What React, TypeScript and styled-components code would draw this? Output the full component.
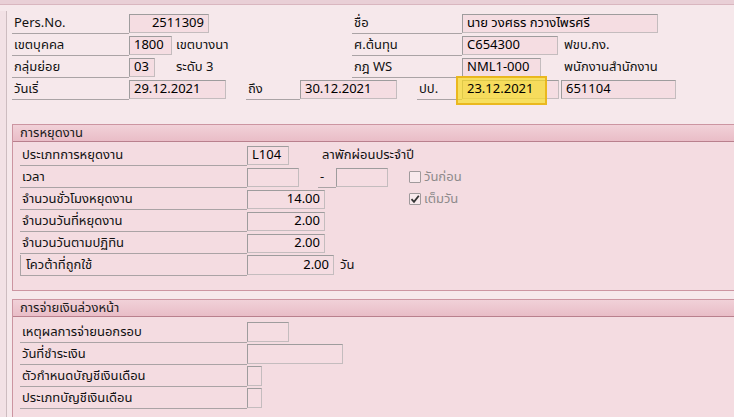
import React from "react";
import styled, { createGlobalStyle } from "styled-components";

const GlobalStyle = createGlobalStyle`
  html, body {
    margin: 0;
    padding: 0;
    background: #f6e8eb;
    overflow: hidden;
  }
  body {
    font-family: Tahoma, "Noto Sans Thai", "Noto Sans", "DejaVu Sans", sans-serif;
    font-size: 13px;
    color: #111;
  }
`;

const Page = styled.div`
  width: 734px;
  height: 417px;
  overflow: hidden;
  background: #f6e8eb;
`;

const TopBand = styled.div`
  height: 4px;
  background: #e9cfd6;
  border-bottom: 1px solid #d9b6bf;
`;

const Body = styled.div`
  display: flex;
`;

const Rail = styled.div`
  width: 6px;
  margin-top: 6px;
  height: 420px;
  background: #f2e1e5;
  border-right: 1px solid #cdbcc0;
  flex: none;
`;

const Content = styled.div`
  flex: 1;
  padding-left: 5px;
  padding-top: 7px;
`;

const Header = styled.div`
  display: flex;
  flex-direction: column;
`;

const Row = styled.div`
  display: flex;
  align-items: center;
  height: 22px;
  white-space: nowrap;
`;

const Label = styled.div<{ $w: number; $ml?: number; $edge?: boolean }>`
  width: ${({ $w }) => $w}px;
  margin-left: ${({ $ml }) => $ml ?? 0}px;
  height: 21px;
  line-height: 20px;
  box-sizing: border-box;
  padding-left: ${({ $edge }) => ($edge ? 5 : 2)}px;
  border-bottom: 1px solid #aaa3a5;
  border-left: ${({ $edge }) => ($edge ? "1px solid #aaa3a5" : "none")};
  flex: none;
  align-self: flex-end;
`;

const Field = styled.div<{ $w: number; $ml?: number; $right?: boolean; $h?: number }>`
  position: relative;
  width: ${({ $w }) => $w}px;
  height: ${({ $h }) => $h ?? 19}px;
  margin-left: ${({ $ml }) => $ml ?? 0}px;
  box-sizing: border-box;
  background: #f5dde2;
  border: 1px solid;
  border-color: #9e9c9d #c4bcbe #c4bcbe #9e9c9d;
  line-height: ${({ $h }) => ($h ?? 19) - 2}px;
  padding: 0 4px;
  text-align: ${({ $right }) => ($right ? "right" : "left")};
  color: #000;
  flex: none;
`;

const Note = styled.div<{ $w?: number; $pl?: number; $grey?: boolean }>`
  width: ${({ $w }) => ($w ? `${$w}px` : "auto")};
  padding-left: ${({ $pl }) => $pl ?? 0}px;
  box-sizing: border-box;
  color: ${({ $grey }) => ($grey ? "#8d8a8b" : "#111")};
  flex: none;
`;

const Highlight = styled.div`
  position: absolute;
  left: -7px;
  top: -5px;
  width: 87px;
  height: 25px;
  background: rgba(247, 219, 40, 0.72);
  border: 2px solid rgba(232, 178, 20, 0.85);
  pointer-events: none;
`;

const HighlightText = styled.span`
  position: relative;
`;

const Group = styled.section<{ $mt: number; $pb: number }>`
  margin-top: ${({ $mt }) => $mt}px;
  margin-right: -20px;
  background: #f4dce1;
  border: 1px solid #cc95a1;
  padding-bottom: ${({ $pb }) => $pb}px;
`;

const GroupTitle = styled.div`
  height: 16px;
  line-height: 16px;
  padding-left: 7px;
  background: linear-gradient(#f1d1d8, #e9bdc7);
  border-bottom: 1px solid #b9808d;
  color: #1a1a1a;
`;

const GroupBody = styled.div<{ $pt: number }>`
  padding: ${({ $pt }) => $pt}px 0 0 7px;
  display: flex;
  flex-direction: column;
`;

const Check = styled.span<{ $ml: number }>`
  width: 12px;
  height: 12px;
  margin-left: ${({ $ml }) => $ml}px;
  margin-right: 3px;
  box-sizing: border-box;
  border: 1px solid #a09a9c;
  border-radius: 1px;
  background: #f8eaed;
  display: inline-flex;
  align-items: center;
  justify-content: center;
  flex: none;
`;

function CheckBox({ checked, ml }: { checked?: boolean; ml: number }) {
  return (
    <Check $ml={ml}>
      {checked && (
        <svg width="10" height="10" viewBox="0 0 10 10">
          <path d="M1.5 5.2 L4 7.8 L8.8 1.8" fill="none" stroke="#333" strokeWidth="1.8" />
        </svg>
      )}
    </Check>
  );
}

export default function App() {
  return (
    <Page>
      <GlobalStyle />
      <TopBand />
      <Body>
        <Rail />
        <Content>
          <Header>
            <Row>
              <Label $w={117}>Pers.No.</Label>
              <Field $w={80} $right>2511309</Field>
              <Label $w={110} $ml={143}>ชื่อ</Label>
              <Field $w={196}>นาย วงศธร กวางไพรศรี</Field>
            </Row>
            <Row>
              <Label $w={117}>เขตบุคคล</Label>
              <Field $w={43}>1800</Field>
              <Note $w={180} $pl={4}>เขตบางนา</Note>
              <Label $w={110}>ศ.ต้นทุน</Label>
              <Field $w={96}>C654300</Field>
              <Note $pl={6}>ฟขบ.กง.</Note>
            </Row>
            <Row>
              <Label $w={117}>กลุ่มย่อย</Label>
              <Field $w={26}>03</Field>
              <Note $w={197} $pl={21}>ระดับ 3</Note>
              <Label $w={110}>กฎ WS</Label>
              <Field $w={79}>NML1-000</Field>
              <Note $pl={23}>พนักงานสำนักงาน</Note>
            </Row>
            <Row>
              <Label $w={117}>วันเริ่</Label>
              <Field $w={97}>29.12.2021</Field>
              <Label $w={54} $ml={20}>ถึง</Label>
              <Field $w={97}>30.12.2021</Field>
              <Label $w={45} $ml={20}>ปป.</Label>
              <Field $w={97}>
                <Highlight />
                <HighlightText>23.12.2021</HighlightText>
              </Field>
              <Field $w={115} $ml={2}>651104</Field>
            </Row>
          </Header>

          <Group $mt={24} $pb={14}>
            <GroupTitle>การหยุดงาน</GroupTitle>
            <GroupBody $pt={2}>
              <Row>
                <Label $w={227}>ประเภทการหยุดงาน</Label>
                <Field $w={42}>L104</Field>
                <Note $pl={33}>ลาพักผ่อนประจำปี</Note>
              </Row>
              <Row>
                <Label $w={227}>เวลา</Label>
                <Field $w={52} />
                <Label $w={18} $ml={19}>-</Label>
                <Field $w={52} />
                <CheckBox ml={21} />
                <Note $grey>วันก่อน</Note>
              </Row>
              <Row>
                <Label $w={227}>จำนวนชั่วโมงหยุดงาน</Label>
                <Field $w={78} $right>14.00</Field>
                <CheckBox ml={84} checked />
                <Note $grey>เต็มวัน</Note>
              </Row>
              <Row>
                <Label $w={227}>จำนวนวันที่หยุดงาน</Label>
                <Field $w={78} $right>2.00</Field>
              </Row>
              <Row>
                <Label $w={227}>จำนวนวันตามปฏิทิน</Label>
                <Field $w={78} $right>2.00</Field>
              </Row>
              <Row>
                <Label $w={227} $edge>โควต้าที่ถูกใช้</Label>
                <Field $w={87} $h={20} $right>2.00</Field>
                <Note $pl={6}>วัน</Note>
              </Row>
            </GroupBody>
          </Group>

          <Group $mt={8} $pb={14}>
            <GroupTitle>การจ่ายเงินล่วงหน้า</GroupTitle>
            <GroupBody $pt={4}>
              <Row>
                <Label $w={227}>เหตุผลการจ่ายนอกรอบ</Label>
                <Field $w={42} $h={20} />
              </Row>
              <Row>
                <Label $w={227}>วันที่ชำระเงิน</Label>
                <Field $w={96} $h={20} />
              </Row>
              <Row>
                <Label $w={227}>ตัวกำหนดบัญชีเงินเดือน</Label>
                <Field $w={15} $h={20} />
              </Row>
              <Row>
                <Label $w={227}>ประเภทบัญชีเงินเดือน</Label>
                <Field $w={15} $h={20} />
              </Row>
            </GroupBody>
          </Group>
        </Content>
      </Body>
    </Page>
  );
}
